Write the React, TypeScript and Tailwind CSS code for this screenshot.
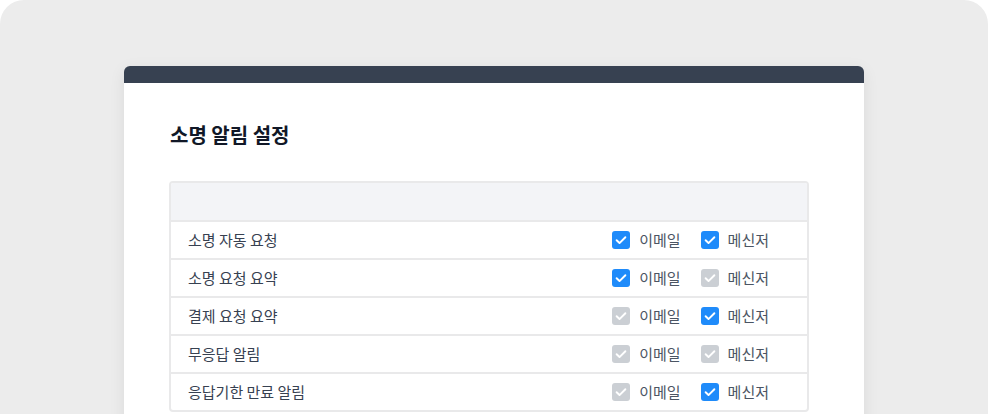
import React from 'react';

type Row = { label: string; email: boolean; messenger: boolean };

const rows: Row[] = [
  { label: '소명 자동 요청', email: true, messenger: true },
  { label: '소명 요청 요약', email: true, messenger: false },
  { label: '결제 요청 요약', email: false, messenger: true },
  { label: '무응답 알림', email: false, messenger: false },
  { label: '응답기한 만료 알림', email: false, messenger: true },
];

const Check: React.FC<{ on: boolean; label: string }> = ({ on, label }) => (
  <label className="flex items-center gap-[9px]">
    <span
      className={`w-[18px] h-[18px] rounded-[3px] flex items-center justify-center ${
        on ? 'bg-[#1f8bfa]' : 'bg-[#cbcfd4]'
      }`}
    >
      <svg viewBox="0 0 16 16" className="w-[14px] h-[14px]" fill="none">
        <path d="M3 8.3l3.3 3.2L13 4.8" stroke="white" strokeWidth="2.2" strokeLinecap="round" strokeLinejoin="round" />
      </svg>
    </span>
    <span className="text-[15px] text-[#4b5563]">{label}</span>
  </label>
);

export default function App() {
  return (
    <div className="w-[988px] h-[414px] bg-white overflow-hidden" style={{ fontFamily: '"Noto Sans CJK KR", "Noto Sans", sans-serif' }}>
      <div className="h-[460px] bg-[#ececec] rounded-[24px] pt-[66px] pl-[124px]">
        <div className="w-[740px] bg-white rounded-t-[6px] border-t-[17px] border-[#374151] shadow-[0_4px_16px_rgba(0,0,0,0.08)] pl-[45px] pr-[55px] pt-[38px] pb-10">
          <h1 className="text-[20px] font-bold text-[#111827] leading-[28px] pl-[1px]">소명 알림 설정</h1>
          <div className="mt-[32px] border-2 border-[#e9e9ea] rounded-[4px] overflow-hidden">
            <div className="h-[37px] bg-[#f3f4f7]" />
            {rows.map((r) => (
              <div key={r.label} className="h-[38px] border-t-2 border-[#e9e9ea] flex items-center pl-[17px] pr-[38px]">
                <span className="flex-1 text-[15px] text-[#374151]">{r.label}</span>
                <div className="flex items-center gap-[20px]">
                  <Check on={r.email} label="이메일" />
                  <Check on={r.messenger} label="메신저" />
                </div>
              </div>
            ))}
          </div>
        </div>
      </div>
    </div>
  );
}
